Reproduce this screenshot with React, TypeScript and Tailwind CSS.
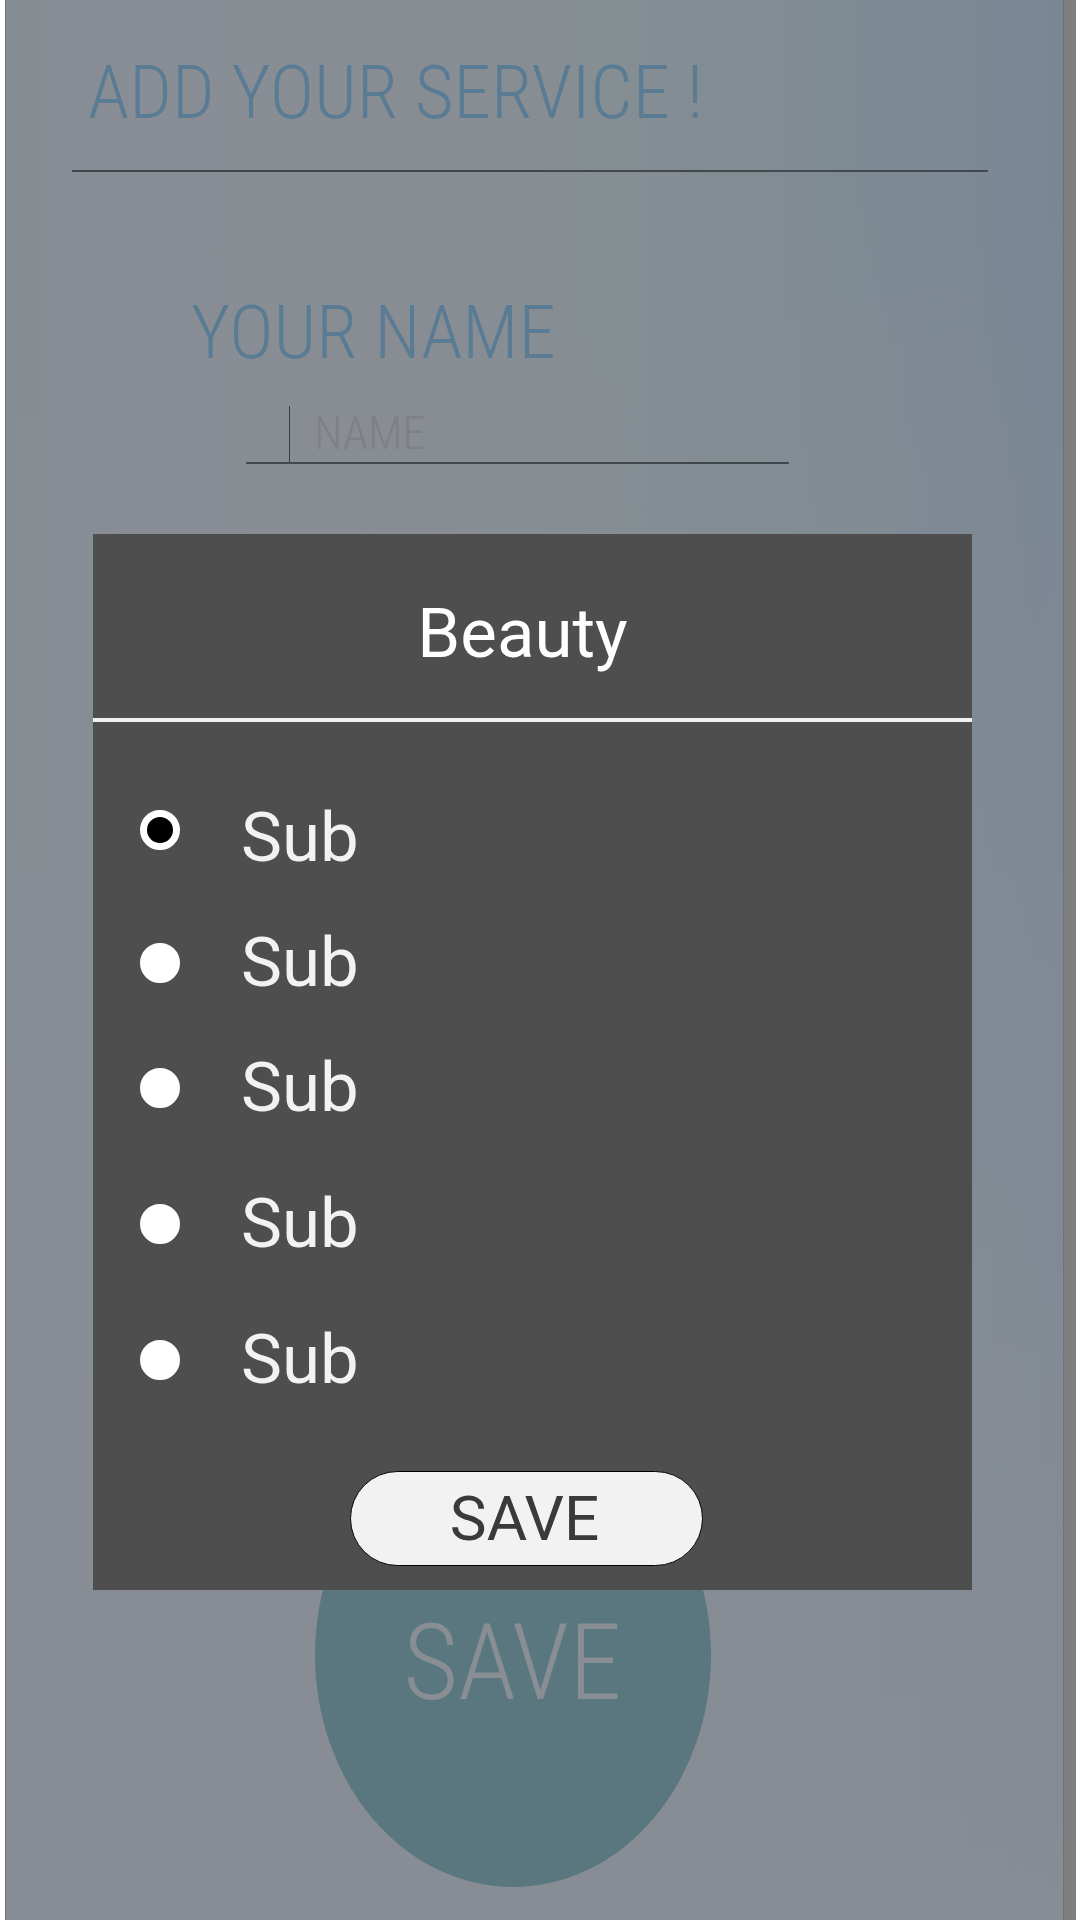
import { useState } from "react";

const options = [
  { id: "sub-1", label: "Sub", spacing: "" },
  { id: "sub-2", label: "Sub", spacing: "mt-[53px]" },
  { id: "sub-3", label: "Sub", spacing: "mt-[53px]" },
  { id: "sub-4", label: "Sub", spacing: "mt-16" },
  { id: "sub-5", label: "Sub", spacing: "mt-16" },
];

function ServiceForm() {
  return (
    <form
      className="flex flex-1 flex-col font-['Roboto_Condensed',Roboto,sans-serif] font-light"
      onSubmit={(e) => e.preventDefault()}
    >
      <h1 className="mr-[75px] ml-[66px] border-b-2 border-[#43484c] pt-11 pb-[30px] pl-4 text-[75px] leading-24 text-[#5a7b94]">
        ADD YOUR SERVICE !
      </h1>
      <label
        htmlFor="name"
        className="mt-28 ml-[185px] self-start text-[75px] leading-24 text-[#5a7b94]"
      >
        YOUR NAME
      </label>
      <div className="mt-6 mr-[274px] ml-60 flex items-end border-b-2 border-[#43484c] pl-[43px]">
        <span className="h-14 w-px bg-[#3a3d40]" />
        <input
          id="name"
          type="text"
          placeholder="NAME"
          className="h-[58px] w-full min-w-0 flex-1 bg-transparent pl-6 text-[46px] outline-none placeholder:text-[#7f8082]"
        />
      </div>
      <button
        type="submit"
        className="mt-auto mr-11 mb-[33px] h-[464px] w-[396px] self-center rounded-[50%] bg-[#5a777f] pt-4 text-[106px] leading-none text-[#898d94]"
      >
        SAVE
      </button>
    </form>
  );
}

function CategoryDialog() {
  const [selected, setSelected] = useState("sub-1");
  return (
    <section
      role="dialog"
      aria-labelledby="dialog-title"
      className="absolute top-[534px] right-[91px] left-[87px] bg-[#4e4e4e]"
    >
      <header className="border-b-4 border-[#f2f2f2] pt-15 pr-5 pb-11">
        <h2 id="dialog-title" className="text-center text-[69px] leading-20 text-white">
          Beauty
        </h2>
      </header>
      <div className="flex flex-col pt-20 pb-6">
        {options.map((option) => (
          <label
            key={option.id}
            className={`flex items-center gap-[61px] self-start pl-[47px] text-[69px] leading-[72px] text-[#f2f2f2] ${option.spacing}`}
          >
            <input
              type="radio"
              name="category"
              value={option.id}
              checked={selected === option.id}
              onChange={() => setSelected(option.id)}
              className="size-10 appearance-none rounded-full border-[7px] border-white bg-white checked:mt-2 checked:self-start checked:bg-black"
            />
            {option.label}
          </label>
        ))}
        <button
          type="button"
          className="mt-[75px] mr-3 h-[95px] w-[353px] self-center rounded-full border border-black bg-[#f2f2f2] pr-1 text-[62px] leading-none text-[#3a3a3a]"
        >
          SAVE
        </button>
      </div>
    </section>
  );
}

export default function App() {
  return (
    <div className="flex min-h-screen bg-white pr-1 pl-[5px] font-[Roboto,sans-serif]">
      <main className="relative flex min-w-0 flex-1 flex-col border-x border-[#6c7379] bg-[linear-gradient(to_bottom,transparent_10%,#888d95_110%),linear-gradient(to_right,#848d93_0%,#898d95_12%,#888d94_40%,#858e93_55%,#7f8b93_80%,#7a8695_100%)]">
        <ServiceForm />
        <CategoryDialog />
      </main>
      <div className="w-3 bg-[#7f7f7f]" />
    </div>
  );
}
